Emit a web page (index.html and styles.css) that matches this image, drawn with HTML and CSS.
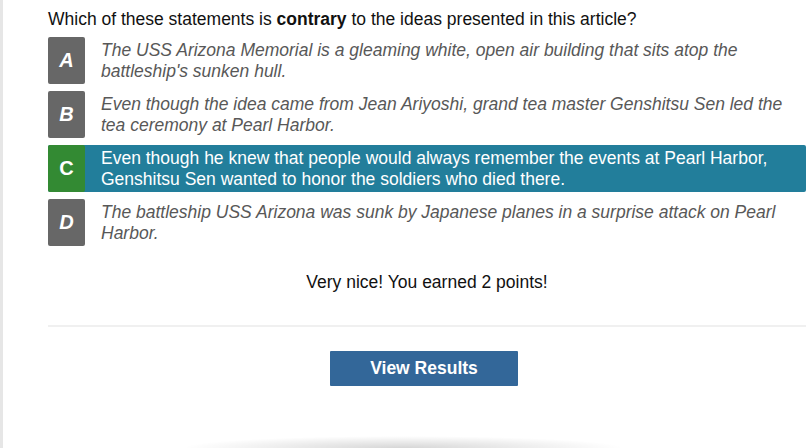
FILE: index.html
```html
<!DOCTYPE html>
<html>
<head>
<meta charset="utf-8">
<link rel="stylesheet" href="styles.css">
</head>
<body>
<div class="page">
  <div class="quiz">
    <p class="question">Which of these statements is <b>contrary</b> to the ideas presented in this article?</p>
    <div class="options">
      <div class="option">
        <div class="badge">A</div>
        <div class="text">The USS Arizona Memorial is a gleaming white, open air building that sits atop the battleship's sunken hull.</div>
      </div>
      <div class="option">
        <div class="badge">B</div>
        <div class="text">Even though the idea came from Jean Ariyoshi, grand tea master Genshitsu Sen led the tea ceremony at Pearl Harbor.</div>
      </div>
      <div class="option correct">
        <div class="badge">C</div>
        <div class="text">Even though he knew that people would always remember the events at Pearl Harbor, Genshitsu Sen wanted to honor the soldiers who died there.</div>
      </div>
      <div class="option">
        <div class="badge">D</div>
        <div class="text">The battleship USS Arizona was sunk by Japanese planes in a surprise attack on Pearl Harbor.</div>
      </div>
    </div>
    <p class="feedback">Very nice! You earned 2 points!</p>
    <hr class="divider">
    <div class="actions">
      <button class="results-btn">View Results</button>
    </div>
  </div>
  <div class="shadow"></div>
</div>
</body>
</html>
```
FILE: styles.css
```css
html, body {
  margin: 0;
  padding: 0;
  background: #fff;
  height: 100%;
  overflow: hidden;
}
body {
  font-family: "Liberation Sans", Arial, sans-serif;
  color: #111;
}
.page {
  border-left: 3px solid #e6e6e6;
  height: 448px;
  box-sizing: border-box;
  display: flex;
  flex-direction: column;
}
.quiz {
  padding: 0 6px 0 45px;
}
.question {
  margin: 0;
  padding-top: 9px;
  font-size: 17.5px;
  line-height: 20px;
  height: 28px;
}
.question b {
  font-weight: bold;
}
.options {
  display: flex;
  flex-direction: column;
  gap: 7px;
}
.option {
  display: flex;
  align-items: center;
  min-height: 47px;
}
.badge {
  flex: 0 0 37px;
  align-self: stretch;
  background: #676767;
  color: #fff;
  border-radius: 2px;
  display: flex;
  align-items: center;
  justify-content: center;
  font-size: 20px;
  font-weight: bold;
  font-style: italic;
}
.text {
  padding: 0 12px 0 16px;
  font-size: 17.5px;
  line-height: 21px;
  font-style: italic;
  color: #585858;
}
.option.correct {
  background: #227e9b;
  border-radius: 2px;
}
.option.correct .badge {
  background: #338a33;
  font-style: normal;
}
.option.correct .text {
  color: #fff;
  font-style: normal;
}
.feedback {
  margin: 26px 0 0;
  text-align: center;
  font-size: 17.5px;
  line-height: 20px;
}
.divider {
  border: 0;
  border-top: 2px solid #f0f0f0;
  margin: 33px 0 0;
}
.actions {
  display: flex;
  justify-content: center;
  padding-top: 24px;
  padding-right: 6px;
}
.results-btn {
  width: 188px;
  height: 35px;
  background: #336799;
  color: #fff;
  border: 0;
  border-radius: 1px;
  font-family: "Liberation Sans", Arial, sans-serif;
  font-weight: bold;
  font-size: 17.5px;
  padding: 0;
}
.shadow {
  margin-top: auto;
  align-self: center;
  width: 440px;
  height: 12px;
  margin-left: -10px;
  background: radial-gradient(ellipse 50% 100% at 50% 100%, rgba(0,0,0,0.16), rgba(0,0,0,0) 100%);
}
```
